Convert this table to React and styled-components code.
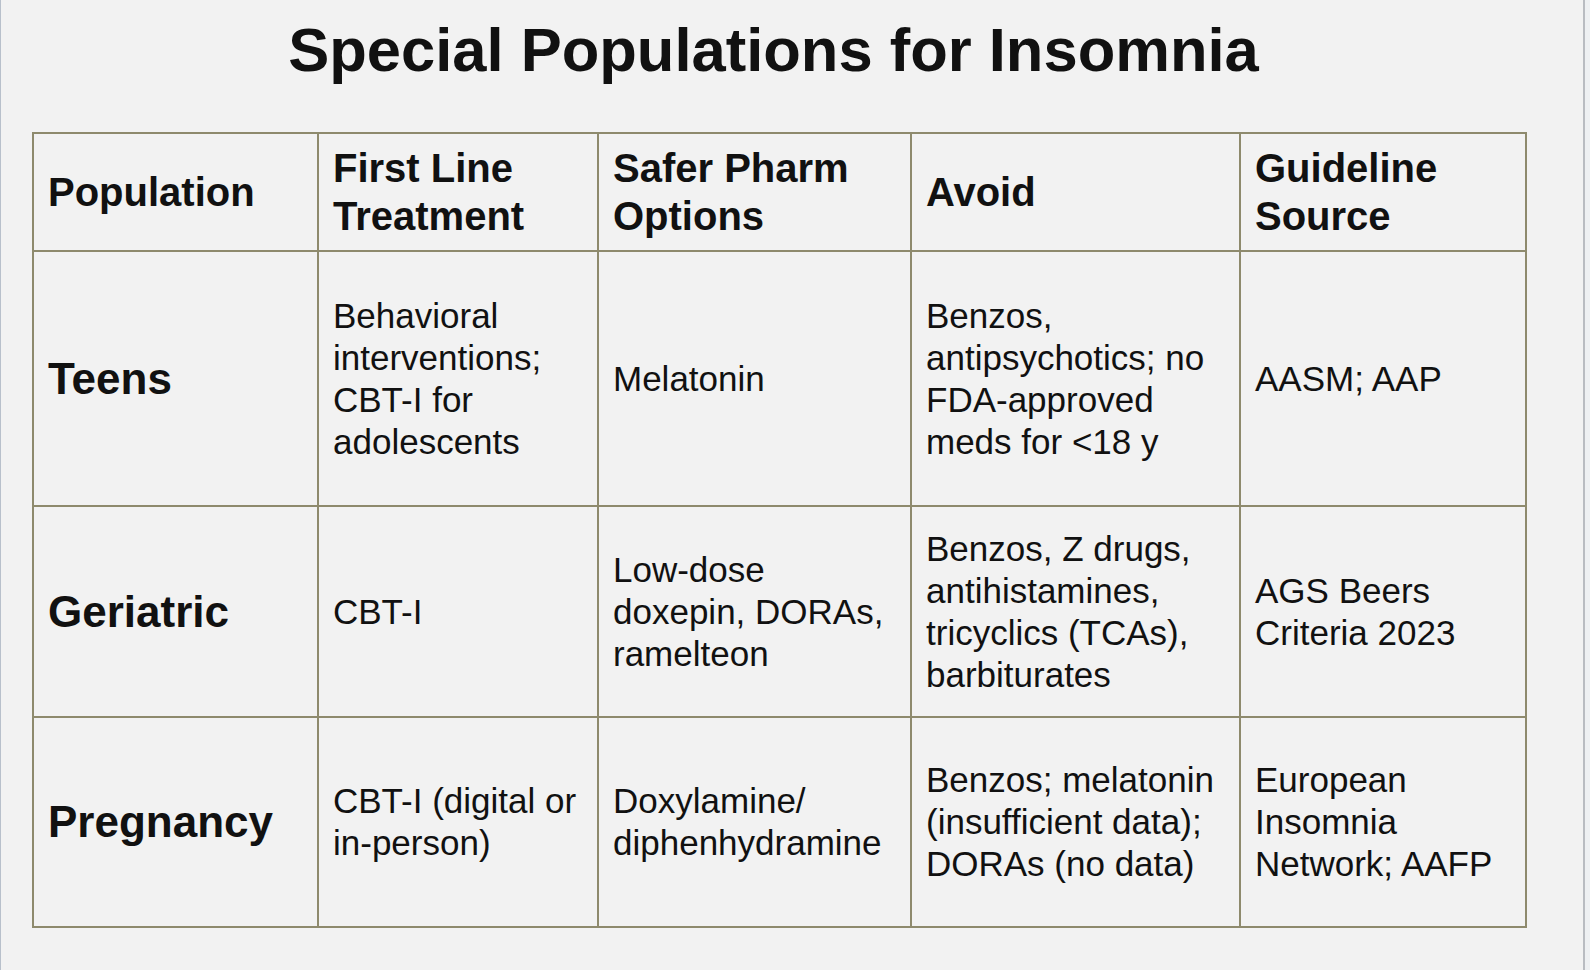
import React from 'react';
import styled, { createGlobalStyle } from 'styled-components';

const GlobalStyle = createGlobalStyle`
  html, body {
    margin: 0;
    padding: 0;
    background: #eef0f2;
  }
  body {
    font-family: "Liberation Sans", Arial, Helvetica, sans-serif;
    color: #111111;
  }
`;

const Slide = styled.div`
  width: 1585px;
  height: 970px;
  box-sizing: border-box;
  background: #f2f2f2;
  border-left: 1px solid #b8c0cb;
  border-right: 2px solid #b9bcc1;
  padding: 15px 0 0 31px;
`;

const Title = styled.h1`
  width: 1483px;
  margin: 0;
  font-size: 61.5px;
  line-height: 70px;
  font-weight: 700;
  text-align: center;
  color: #111111;
`;

const Grid = styled.div`
  margin-top: 47px;
  display: grid;
  grid-template-columns: 285px 280px 313px 329px 286px;
  grid-template-rows: 118px 255px 211px 210px;
  width: max-content;
  border-top: 2px solid #8e8a6d;
  border-left: 2px solid #8e8a6d;
`;

const Cell = styled.div`
  box-sizing: border-box;
  display: flex;
  align-items: center;
  padding: 0 13px 0 14px;
  border-right: 2px solid #8e8a6d;
  border-bottom: 2px solid #8e8a6d;
  font-size: ${(p) => (p.$head ? '40px' : p.$label ? '44px' : '35px')};
  line-height: ${(p) => (p.$head ? '48px' : p.$label ? '52px' : '42px')};
  font-weight: ${(p) => (p.$head || p.$label ? 700 : 400)};
`;

const headers = ['Population', 'First Line Treatment', 'Safer Pharm Options', 'Avoid', 'Guideline Source'];

const rows = [
  {
    name: 'Teens',
    cells: [
      'Behavioral interventions; CBT-I for adolescents',
      'Melatonin',
      'Benzos, antipsychotics; no FDA-approved meds for <18 y',
      'AASM; AAP',
    ],
  },
  {
    name: 'Geriatric',
    cells: [
      'CBT-I',
      'Low-dose doxepin, DORAs, ramelteon',
      'Benzos, Z drugs, antihistamines, tricyclics (TCAs), barbiturates',
      'AGS Beers Criteria 2023',
    ],
  },
  {
    name: 'Pregnancy',
    cells: [
      'CBT-I (digital or in-person)',
      <>Doxylamine/<wbr />diphenhydramine</>,
      'Benzos; melatonin (insufficient data); DORAs (no data)',
      'European Insomnia Network; AAFP',
    ],
  },
];

export default function App() {
  return (
    <>
      <GlobalStyle />
      <Slide>
        <Title>Special Populations for Insomnia</Title>
        <Grid>
          {headers.map((h) => (
            <Cell key={h} $head>
              <span>{h}</span>
            </Cell>
          ))}
          {rows.map((r) => (
            <React.Fragment key={r.name}>
              <Cell $label>
                <span>{r.name}</span>
              </Cell>
              {r.cells.map((c, i) => (
                <Cell key={i}>
                  <span>{c}</span>
                </Cell>
              ))}
            </React.Fragment>
          ))}
        </Grid>
      </Slide>
    </>
  );
}
